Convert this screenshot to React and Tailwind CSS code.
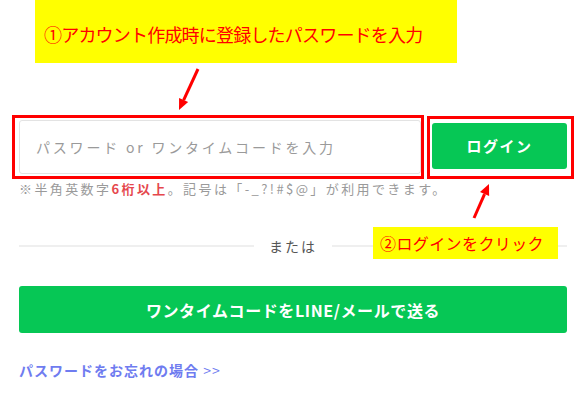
const jp = { fontFamily: '"Noto Sans CJK JP", "Noto Sans", sans-serif' };

function Arrow({ x1, y1, x2, y2 }) {
  // red callout arrow, head at (x2, y2)
  const a = Math.atan2(y2 - y1, x2 - x1);
  const L = 11, W = 5;
  const bx = x2 - L * Math.cos(a), by = y2 - L * Math.sin(a);
  const p1 = `${bx + W * Math.sin(a)},${by - W * Math.cos(a)}`;
  const p2 = `${bx - W * Math.sin(a)},${by + W * Math.cos(a)}`;
  return (
    <g>
      <line x1={x1} y1={y1} x2={bx} y2={by} stroke="#ff0000" strokeWidth="3" />
      <polygon points={`${x2},${y2} ${p1} ${p2}`} fill="#ff0000" />
    </g>
  );
}

export default function App() {
  return (
    <div className="relative w-[581px] h-[393px] bg-white overflow-hidden" style={jp}>
      <div className="ml-[35px] w-[422px] h-[63px] bg-[#ffff00] pl-[9px] pt-[22px] text-[18px] leading-[24px] tracking-[-0.8px] text-[#ff0000] whitespace-nowrap">
        ①アカウント作成時に登録したパスワードを入力
      </div>

      <div className="mt-[52px] flex items-start">
        <div className="ml-[12px] w-[412px] h-[64px] border-[3px] border-[#ff0000] pl-[4px] pt-[2px]">
          <input
            className="w-[402px] h-[54px] border border-[#e3e3e3] rounded-[3px] px-4 text-[14px] tracking-[2.8px] text-[#333] placeholder:text-[#9a9a9a] outline-none"
            placeholder="パスワード or ワンタイムコードを入力"
            style={jp}
          />
        </div>
        <div className="ml-[3px] mt-[1px] w-[147px] h-[63px] border-[3px] border-[#ff0000] pl-[2px] pt-[4px]">
          <button className="w-[135px] h-[46px] rounded-[3px] bg-[#06c755] text-white text-[15px] font-bold tracking-[1.5px]" style={jp}>
            ログイン
          </button>
        </div>
      </div>

      <p className="ml-[19px] mt-[1px] text-[13px] leading-[18px] tracking-[2.4px] text-[#9a9a9a] whitespace-nowrap">
        ※半角英数字<span className="text-[#e5474d] font-bold">6桁以上</span>。記号は「-_?!#$@」が利用できます。
      </p>

      <div className="mr-[14px] ml-[19px] mt-[38px] flex items-center">
        <div className="flex-1 h-[2px] bg-[#efefef]" />
        <span className="px-[15px] text-[14px] leading-[20px] tracking-[2px] text-[#555]">または</span>
        <div className="flex-1 h-[2px] bg-[#efefef]" />
      </div>

      <button className="ml-[19px] mt-[30px] w-[548px] h-[47px] rounded-[3px] bg-[#06c755] text-white text-[16px] font-bold tracking-[0.6px]" style={jp}>
        ワンタイムコードをLINE/メールで送る
      </button>

      <div className="ml-[19px] mt-[27px] text-[14px] leading-[20px] font-bold tracking-[1px] text-[#6f7cf0]">
        パスワードをお忘れの場合 <span className="font-normal">&gt;&gt;</span>
      </div>

      <div className="absolute left-[373px] top-[227px] w-[185px] h-[32px] bg-[#ffff00] pl-[7px] pt-[5px] text-[16px] leading-[22px] tracking-[0.4px] text-[#ff0000] whitespace-nowrap">
        ②ログインをクリック
      </div>

      <svg className="absolute left-0 top-0" width="581" height="393">
        <Arrow x1={198} y1={69} x2={179} y2={110} />
        <Arrow x1={474} y1={218} x2={489} y2={184} />
      </svg>
    </div>
  );
}
